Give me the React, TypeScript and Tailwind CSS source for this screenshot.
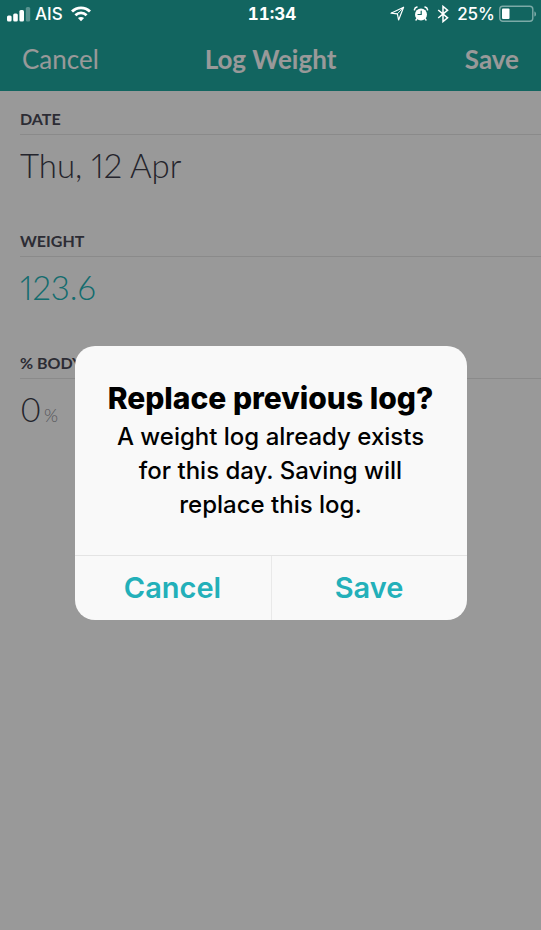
import React, { useState } from 'react';

const SignalIcon = () => (
    <svg className="w-6 h-4" viewBox="0 0 24 16" fill="#fff">
        <rect x="0" y="9.5" width="4.6" height="6" rx="1.5" />
        <rect x="6.2" y="7.5" width="4.6" height="8" rx="1.5" />
        <rect x="12.4" y="4" width="4.6" height="11.5" rx="1.5" />
        <rect x="18.8" y="1" width="4.4" height="14.5" rx="1.5" opacity="0.3" />
    </svg>
);

const WifiIcon = () => (
    <svg className="w-5 h-4" viewBox="0 0 20 16" fill="none" stroke="#fff" strokeWidth="2.8">
        <path d="M1 5.6C6 .6 14 .6 19 5.6" />
        <path d="M4.4 9.2c3.2-3 8-3 11.2 0" />
        <path d="M10 15.2L6.9 12.1c1.7-1.6 4.5-1.6 6.2 0z" fill="#fff" stroke="none" />
    </svg>
);

const LocationIcon = () => (
    <svg className="w-4 h-4" viewBox="0 0 16 16" fill="none" stroke="#fff" strokeWidth="1.2" strokeLinejoin="round">
        <path d="M14.6 1.2L2 7.2L8.4 7.8L9.6 14z" />
        <path d="M14.6 1.2L8.4 7.8" strokeWidth="0.9" />
    </svg>
);

const AlarmIcon = () => (
    <svg className="w-4 h-4" viewBox="0 0 16 16" fill="none" strokeLinecap="round">
        <circle cx="8" cy="8.4" r="6" fill="#fff" />
        <path d="M1.4 3.8C1.7 2.3 2.6 1.4 4 1.1M14.6 3.8C14.3 2.3 13.4 1.4 12 1.1" stroke="#fff" strokeWidth="1.5" />
        <path d="M4 12.6L3 14M12 12.6l1 1.4" stroke="#fff" strokeWidth="1.5" />
        <path d="M5 8.5h3.2V5" stroke="#126560" strokeWidth="1.2" />
    </svg>
);

const BluetoothIcon = () => (
    <svg className="w-3 h-[18px]" viewBox="0 0 12 18" fill="none" stroke="#fff" strokeWidth="1.5" strokeLinejoin="miter">
        <path d="M1.2 5l9.4 7.8L6 16.6V1.4l4.6 3.8L1.2 13" />
    </svg>
);

const BatteryIcon = () => (
    <svg className="w-[38px] h-[18px]" viewBox="0 0 38 18" fill="none">
        <rect x="0.8" y="1.3" width="33" height="15" rx="3" stroke="#fff" strokeOpacity="0.45" strokeWidth="1.4" />
        <rect x="3" y="3.5" width="7.5" height="10.6" rx="1" fill="#fff" />
        <path d="M35.4 6.4c2.2.6 2.2 4.6 0 5.2z" fill="#fff" fillOpacity="0.45" />
    </svg>
);

const StatusBar = () => (
    <div className="absolute inset-x-0 top-0 z-20 grid grid-cols-[1fr_auto_1fr] items-center h-[27px] pl-[7px] pr-1 font-['Inter',sans-serif] text-[17px] leading-6 text-white">
        <div className="flex items-center gap-1">
            <SignalIcon />
            <span className="mr-1 font-medium">AIS</span>
            <WifiIcon />
        </div>
        <span className="font-bold tabular-nums">11:34</span>
        <div className="flex items-center justify-end gap-2">
            <LocationIcon />
            <AlarmIcon />
            <BluetoothIcon />
            <div className="flex items-center gap-1">
                <span className="font-medium">25%</span>
                <BatteryIcon />
            </div>
        </div>
    </div>
);

const fields = [
    { id: 'date', label: 'DATE', value: 'Thu, 12 Apr', color: 'text-[#3c3c4a]' },
    { id: 'weight', label: 'WEIGHT', value: '123.6', color: 'text-[#22b4b8]' },
    { id: 'fat', label: '% BODY FAT', value: '0', color: 'text-[#3c3c4a]', unit: '%' },
];

const Field = ({ field }: { field: (typeof fields)[number] }) => (
    <div className="pl-5 mb-[14px]">
        <label
            htmlFor={field.id}
            className="block pt-4 pb-[3px] border-b border-[#e6e6e6] text-[16px] leading-6 font-bold text-[#4a4a58]"
        >
            {field.label}
        </label>
        <div className="flex items-center h-16 pb-1">
            <input
                id={field.id}
                defaultValue={field.value}
                className={`${field.unit ? 'w-6' : 'w-60'} bg-transparent outline-none text-[33px] leading-10 font-light proportional-nums ${field.color}`}
            />
            {field.unit && <span className="pt-3 text-[18px] leading-6 font-light text-[#8c8c94]">{field.unit}</span>}
        </div>
    </div>
);

const ReplaceDialog = ({ onClose }: { onClose: () => void }) => (
    <div className="absolute inset-0 z-10 flex items-center justify-center px-5 pt-9 bg-black/40">
        <div
            role="alertdialog"
            aria-labelledby="dialog-title"
            aria-describedby="dialog-text"
            className="w-full max-w-[392px] rounded-[20px] overflow-hidden bg-[#f9f9f9] text-center font-['Inter',sans-serif]"
        >
            <div className="px-7 pt-9 pb-[33px]">
                <h2 id="dialog-title" className="text-[30px] leading-8 font-extrabold text-black">Replace previous log?</h2>
                <p id="dialog-text" className="px-1 pt-[6px] text-[24px] leading-[34px] font-medium text-black">
                    A weight log already exists for this day. Saving will replace this log.
                </p>
            </div>
            <div className="grid grid-cols-2 border-t border-[#e4e4e4] text-[29px] leading-8 font-semibold text-[#23b0b9]">
                <button type="button" onClick={onClose} className="h-16">Cancel</button>
                <button type="button" onClick={onClose} className="h-16 border-l border-[#e9e9e9]">Save</button>
            </div>
        </div>
    </div>
);

export default function App() {
    const [open, setOpen] = useState(true);

    return (
        <div className="relative min-h-screen bg-white font-['Lato',sans-serif]">
            <StatusBar />
            <header className="grid grid-cols-[1fr_auto_1fr] items-center pt-[27px] px-[22px] h-[91px] bg-[#1ea8a0] text-[26px] leading-8 text-white">
                <button type="button" className="justify-self-start">Cancel</button>
                <h1 className="font-bold">Log Weight</h1>
                <button type="button" onClick={() => setOpen(true)} className="justify-self-end font-bold">Save</button>
            </header>
            <main>
                {fields.map((field) => (
                    <Field key={field.id} field={field} />
                ))}
            </main>
            {open && <ReplaceDialog onClose={() => setOpen(false)} />}
        </div>
    );
}
